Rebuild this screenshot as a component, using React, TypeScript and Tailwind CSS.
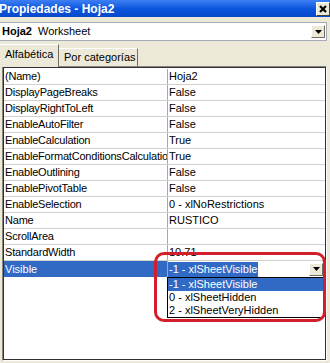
const rows: [string, string][] = [
  ["(Name)", "Hoja2"],
  ["DisplayPageBreaks", "False"],
  ["DisplayRightToLeft", "False"],
  ["EnableAutoFilter", "False"],
  ["EnableCalculation", "True"],
  ["EnableFormatConditionsCalculation", "True"],
  ["EnableOutlining", "False"],
  ["EnablePivotTable", "False"],
  ["EnableSelection", "0 - xlNoRestrictions"],
  ["Name", "RUSTICO"],
  ["ScrollArea", ""],
  ["StandardWidth", "10.71"],
];

const options = ["-1 - xlSheetVisible", "0 - xlSheetHidden", "2 - xlSheetVeryHidden"];

function DropArrow() {
  return (
    <svg width="7" height="4" viewBox="0 0 7 4" aria-hidden>
      <path d="M0 0h7L3.5 4z" fill="#000" />
    </svg>
  );
}

export default function App() {
  return (
    <div className="relative h-[363px] w-[330px] overflow-hidden bg-[#ece9d8] font-['Liberation_Sans',Arial,sans-serif] text-[11px] leading-none text-black">
      {/* Title bar */}
      <div className="flex h-[17px] items-center justify-between bg-gradient-to-b from-[#3d80f3] via-[#0b56de] to-[#0949cc]">
        <span className="-ml-px text-[12px] font-bold text-white">Propiedades - Hoja2</span>
        <div className="flex h-[14px] w-[14px] items-center justify-center border border-white border-b-[#404040] border-r-[#404040] bg-[#ece9d8]">
          <svg width="8" height="8" viewBox="0 0 8 8" aria-hidden>
            <path d="M1 1l6 6M7 1L1 7" stroke="#000" strokeWidth="2.2" />
          </svg>
        </div>
      </div>

      {/* Object combo */}
      <div className="pt-[5px] pr-[3px]">
        <div className="flex h-[19px] items-center border-y border-r border-[#a5acb5] bg-white pl-[2px]">
          <span className="font-bold">Hoja2</span>
          <span className="ml-[6px]">Worksheet</span>
          <div className="ml-auto mr-[1px] flex h-[13px] w-[14px] items-center justify-center border border-white border-b-[#716f64] border-r-[#716f64] bg-[#ece9d8]">
            <DropArrow />
          </div>
        </div>
      </div>

      {/* Tabs */}
      <div className="mt-[3px] flex h-[22px] items-end">
        <div className="relative z-10 -mb-[1px] flex h-[23px] w-[59px] items-center border-r border-t border-r-[#716f64] border-t-white bg-[#ece9d8] pb-[4px] pl-[5px]">
          Alfabética
        </div>
        <div className="flex h-[18px] w-[79px] items-center border-r border-t border-r-[#716f64] border-t-white pl-[5px]">
          Por categorías
        </div>
      </div>

      {/* Property grid */}
      <div className="ml-[2px] h-[295px] w-[325px] border border-[#8a877a] border-b-white border-r-white">
        <div className="h-full border border-[#303030] bg-white pt-px">
          {rows.map(([name, value]) => (
            <div key={name} className="flex h-[16px] border-b border-[#d4d0c8]">
              <div className="flex w-[164px] items-center overflow-hidden whitespace-nowrap border-r border-[#aca899] pl-px tracking-[-0.2px]">
                {name}
              </div>
              <div className="flex flex-1 items-center pl-px">{value}</div>
            </div>
          ))}
          <div className="flex h-[16px]">
            <div className="flex w-[164px] items-center border-r border-[#aca899] bg-[#316ac5] pl-px text-white">
              Visible
            </div>
            <div className="flex flex-1 items-center">
              <span className="bg-[#316ac5] px-px py-[2px] text-white">-1 - xlSheetVisible</span>
              <div className="ml-auto mr-[2px] flex h-[13px] w-[14px] items-center justify-center border border-white border-b-[#716f64] border-r-[#716f64] bg-[#ece9d8]">
                <DropArrow />
              </div>
            </div>
          </div>
        </div>
      </div>

      {/* Open dropdown list */}
      <div className="absolute left-[167px] top-[277px] w-[157px] border border-black bg-white">
        {options.map((o, i) => (
          <div
            key={o}
            className={
              i === 0
                ? "flex h-[13px] items-center bg-[#316ac5] pl-px text-white"
                : "flex h-[13px] items-center pl-px"
            }
          >
            {o}
          </div>
        ))}
      </div>

      {/* Red annotation */}
      <div className="pointer-events-none absolute left-[154px] top-[252px] h-[70px] w-[172px] rounded-[10px] border-[3px] border-[#d21f2b]" />
    </div>
  );
}
